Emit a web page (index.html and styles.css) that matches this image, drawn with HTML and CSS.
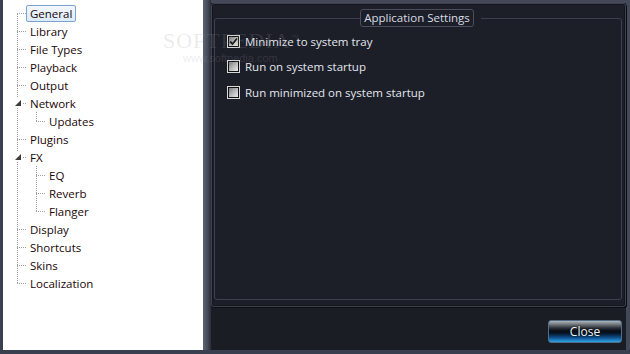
FILE: index.html
```html
<!DOCTYPE html>
<html>
<head>
<meta charset="utf-8">
<link rel="stylesheet" href="styles.css">
</head>
<body>
<div class="window">
  <div class="main">
    <div class="edge-left"></div>
    <div class="tree">
      <ul class="level root">
        <li><div class="row"><span class="label selected">General</span></div></li>
        <li><div class="row"><span class="label">Library</span></div></li>
        <li><div class="row"><span class="label">File Types</span></div></li>
        <li><div class="row"><span class="label">Playback</span></div></li>
        <li><div class="row"><span class="label">Output</span></div></li>
        <li>
          <div class="row expanded"><span class="expander"><svg width="6" height="6" viewBox="0 0 6 6"><path d="M6 0 L6 6 L0 6 Z" fill="#3c3c3c"/></svg></span><span class="label">Network</span></div>
          <ul class="level sub">
            <li><div class="row"><span class="label">Updates</span></div></li>
          </ul>
        </li>
        <li><div class="row"><span class="label">Plugins</span></div></li>
        <li>
          <div class="row expanded"><span class="expander"><svg width="6" height="6" viewBox="0 0 6 6"><path d="M6 0 L6 6 L0 6 Z" fill="#3c3c3c"/></svg></span><span class="label">FX</span></div>
          <ul class="level sub">
            <li><div class="row"><span class="label">EQ</span></div></li>
            <li><div class="row"><span class="label">Reverb</span></div></li>
            <li><div class="row"><span class="label">Flanger</span></div></li>
          </ul>
        </li>
        <li><div class="row"><span class="label">Display</span></div></li>
        <li><div class="row"><span class="label">Shortcuts</span></div></li>
        <li><div class="row"><span class="label">Skins</span></div></li>
        <li><div class="row"><span class="label">Localization</span></div></li>
      </ul>
    </div>
    <div class="splitter"></div>
    <div class="content">
      <div class="frame">
        <fieldset class="group">
          <legend class="group-title">Application Settings</legend>
          <div class="options">
            <label class="option"><span class="check checked"><svg width="9" height="9" viewBox="0 0 9 9"><path d="M1 4.5 L3.5 7 L8 1.5" fill="none" stroke="#1a1a1a" stroke-width="1.8"/></svg></span><span>Minimize to system tray</span></label>
            <label class="option"><span class="check"></span><span>Run on system startup</span></label>
            <label class="option"><span class="check"></span><span>Run minimized on system startup</span></label>
          </div>
        </fieldset>
      </div>
      <div class="actions">
        <button class="btn-close">Close</button>
      </div>
    </div>
  </div>
  <div class="edge-bottom"></div>
  <div class="watermark" aria-hidden="true">
    <div class="wm-big">SOFTPEDIA<sup>™</sup></div>
    <div class="wm-small">www.softpedia.com</div>
  </div>
</div>
</body>
</html>
```

FILE: styles.css
```css
html, body {
  margin: 0;
  padding: 0;
  background: #1b1d25;
}
.window {
  position: relative;
  width: 630px;
  height: 354px;
  display: flex;
  flex-direction: column;
  overflow: hidden;
  font-family: "Segoe UI", "Open Sans", sans-serif;
  font-size: 11.5px;
}
.main {
  display: flex;
  height: 350px;
}
.edge-left {
  width: 3px;
  background: #3b4050;
}
.edge-bottom {
  height: 4px;
  background: #3a3f4f;
}
.tree {
  width: 200px;
  background: #ffffff;
  padding-top: 4px;
  box-sizing: border-box;
}
.level {
  list-style: none;
  margin: 0;
  padding: 0;
  position: relative;
}
.level::before {
  content: "";
  position: absolute;
  left: 0;
  top: 9px;
  bottom: 9px;
  border-left: 1px dotted #a0a0a0;
}
.root {
  margin-left: 14px;
}
.sub {
  margin-left: 19px;
}
.sub::before {
  top: 0;
}
.row {
  position: relative;
  height: 18px;
  display: flex;
  align-items: center;
  padding-left: 9px;
}
.row::before {
  content: "";
  position: absolute;
  left: 0;
  width: 9px;
  top: 9px;
  border-top: 1px dotted #a0a0a0;
}
.expander {
  position: absolute;
  left: -4px;
  top: 4px;
  width: 9px;
  height: 9px;
  background: #fff;
  display: flex;
  align-items: center;
  justify-content: center;
  z-index: 1;
}
.label {
  color: #1a0606;
  padding: 0 3px;
  border: 1px solid transparent;
  border-radius: 2px;
  line-height: 15px;
  white-space: nowrap;
}
.label.selected {
  border-color: #7da2ce;
  background: linear-gradient(#f3f8fe, #dcebfc);
}
.splitter {
  width: 8px;
  background: linear-gradient(to right, #5e6371 0%, #4a4f5d 50%, #2a2d38 100%);
}
.content {
  flex: 1;
  display: flex;
  flex-direction: column;
  border-top: 3px solid #444959;
  border-right: 4px solid #444959;
}
.frame {
  height: 304px;
  box-sizing: border-box;
  border: 1px solid #3e4250;
  border-radius: 3px;
  box-shadow: inset 0 0 0 1px #14161c, 1px 1px 0 #0c0d10;
  background: #1d1f28;
  padding: 5px 3px 6px 2px;
  display: flex;
}
.group {
  flex: 1;
  margin: 0;
  padding: 0 0 0 12px;
  border: 1px solid #3c3f4e;
  border-radius: 3px;
  min-width: 0;
}
.group-title {
  margin: 0 auto;
  position: relative;
  left: -7px;
  padding: 0 3px;
  height: 16px;
  line-height: 16px;
  border: 1px solid #4a4d5c;
  border-radius: 3px;
  background: #1d1f28;
  color: #d8dce6;
}
.options {
  display: flex;
  flex-direction: column;
  gap: 11.5px;
  padding-top: 7px;
}
.option {
  display: flex;
  align-items: center;
  gap: 5px;
  height: 14px;
  color: #e2e6ee;
}
.check {
  width: 11px;
  height: 11px;
  border: 1px solid #d8d8d8;
  box-shadow: inset 0 0 0 1px #101010;
  background: linear-gradient(135deg, #6e6e70 0%, #b8b8ba 50%, #f6f6f6 100%);
  display: flex;
  align-items: center;
  justify-content: center;
}
.actions {
  display: flex;
  justify-content: flex-end;
  padding-top: 13px;
  padding-right: 4px;
}
.btn-close {
  width: 74px;
  height: 23px;
  border: 1px solid #4d6d88;
  border-radius: 3px;
  background: linear-gradient(to bottom, #b0b5ba 0%, #6a6f76 18%, #2a2e35 34%, #060c16 48%, #06182c 60%, #0f5290 80%, #2ea4e6 100%);
  color: #eef4fa;
  font-family: "Segoe UI", "Open Sans", sans-serif;
  font-size: 12px;
  padding: 0;
  text-shadow: 0 0 2px #000;
}
.watermark {
  position: absolute;
  left: 163px;
  top: 28px;
  pointer-events: none;
  color: rgba(150, 152, 162, 0.2);
}
.wm-big {
  font-family: "Liberation Serif", serif;
  font-size: 22px;
  letter-spacing: 1px;
}
.wm-big sup {
  font-size: 8px;
  font-family: "Liberation Sans", sans-serif;
}
.wm-small {
  font-family: "Liberation Sans", sans-serif;
  font-size: 11px;
  margin-left: 20px;
  margin-top: -2px;
}
```
